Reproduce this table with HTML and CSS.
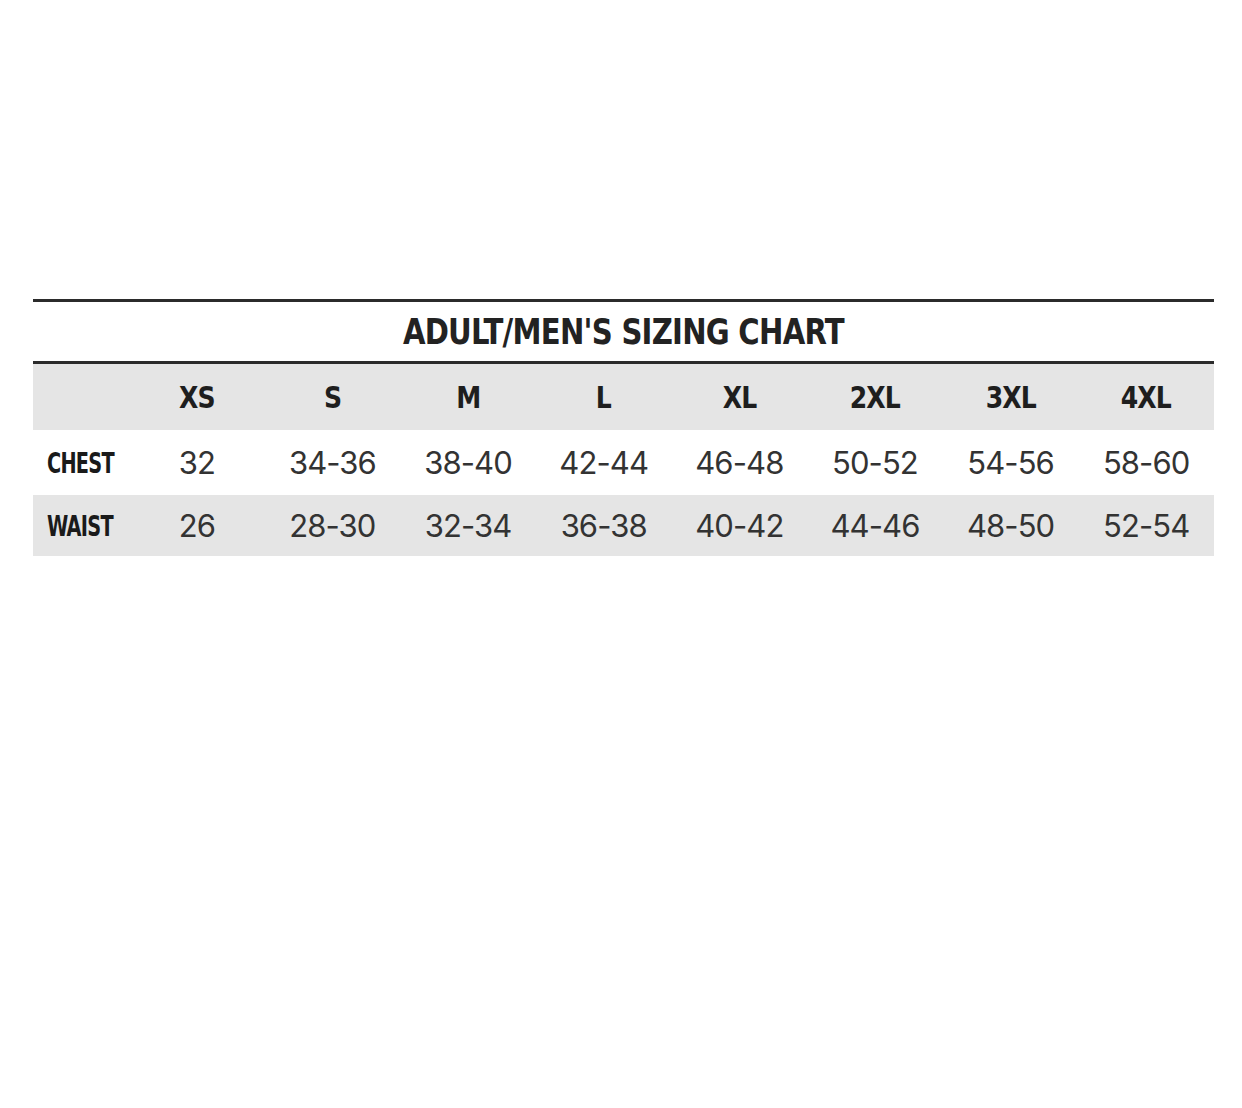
FILE: index.html
```html
<!DOCTYPE html>
<html lang="en">
<head>
<meta charset="utf-8">
<title>Adult/Men's Sizing Chart</title>
<link rel="stylesheet" href="styles.css">
</head>
<body>
<div class="page">
  <div class="chart">
    <div class="title-bar"><h1 class="title">ADULT/MEN'S SIZING CHART</h1></div>
    <table class="sizes">
      <colgroup>
        <col class="col-label">
        <col><col><col><col><col><col><col><col>
      </colgroup>
      <thead>
        <tr class="row-head">
          <th></th>
          <th><span class="size">XS</span></th>
          <th><span class="size">S</span></th>
          <th><span class="size">M</span></th>
          <th><span class="size">L</span></th>
          <th><span class="size">XL</span></th>
          <th><span class="size">2XL</span></th>
          <th><span class="size">3XL</span></th>
          <th><span class="size">4XL</span></th>
        </tr>
      </thead>
      <tbody>
        <tr class="row-chest">
          <th class="label"><span class="label-text">CHEST</span></th>
          <td>32</td><td>34-36</td><td>38-40</td><td>42-44</td><td>46-48</td><td>50-52</td><td>54-56</td><td>58-60</td>
        </tr>
        <tr class="row-waist">
          <th class="label"><span class="label-text">WAIST</span></th>
          <td>26</td><td>28-30</td><td>32-34</td><td>36-38</td><td>40-42</td><td>44-46</td><td>48-50</td><td>52-54</td>
        </tr>
      </tbody>
    </table>
  </div>
</div>
</body>
</html>
```
FILE: styles.css
```css
html, body {
  margin: 0;
  padding: 0;
  background: #ffffff;
}

.page {
  width: 1242px;
  height: 1108px;
  padding: 299px 0 0 33px;
  box-sizing: border-box;
}

.chart {
  width: 1181px;
}

.title-bar {
  border-top: 3px solid #2b2b2b;
  border-bottom: 3px solid #2b2b2b;
  height: 59px;
  display: flex;
  align-items: center;
  justify-content: center;
}

.title {
  margin: 0;
  font-family: "DejaVu Sans Condensed", "DejaVu Sans", sans-serif;
  font-stretch: condensed;
  font-weight: bold;
  font-size: 35px;
  letter-spacing: -0.8px;
  color: #222222;
  line-height: 1;
  padding-top: 2px;
  transform: scaleX(0.925);
}

.sizes {
  width: 1181px;
  table-layout: fixed;
  border-collapse: collapse;
  border-spacing: 0;
}

.col-label {
  width: 96px;
}

.sizes th,
.sizes td {
  padding: 0;
  text-align: center;
  vertical-align: middle;
}

.row-head {
  background: #e5e5e5;
  height: 66px;
}

.row-chest {
  background: #ffffff;
  height: 65px;
}

.row-waist {
  background: #e5e5e5;
  height: 61px;
}

.size {
  display: inline-block;
  font-family: "DejaVu Sans Condensed", "DejaVu Sans", sans-serif;
  font-stretch: condensed;
  font-weight: bold;
  font-size: 31px;
  letter-spacing: -1px;
  color: #1e1e1e;
  transform: scaleX(0.9);
}

.sizes td {
  font-family: "Inter", "DejaVu Sans", sans-serif;
  font-weight: 400;
  font-size: 31px;
  letter-spacing: -0.9px;
  color: #333333;
}

.label {
  text-align: left !important;
  padding-left: 14px !important;
}

.label-text {
  display: inline-block;
  font-family: "DejaVu Sans Condensed", "DejaVu Sans", sans-serif;
  font-stretch: condensed;
  font-weight: bold;
  font-size: 29px;
  letter-spacing: -1px;
  color: #1a1a1a;
  transform: scaleX(0.74);
  transform-origin: left center;
}
```
